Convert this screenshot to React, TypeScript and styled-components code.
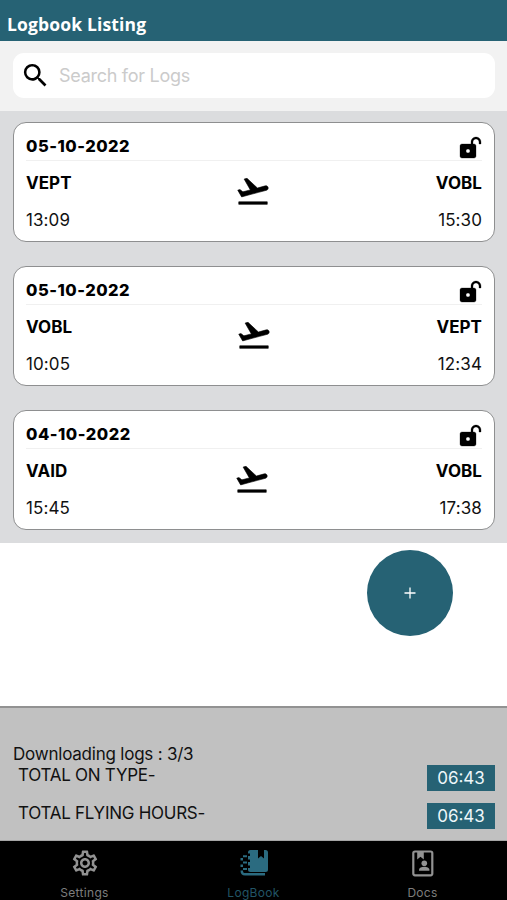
import React from 'react';
import styled, { createGlobalStyle } from 'styled-components';
import { MdSearch, MdOutlineSettings } from 'react-icons/md';

const TEAL = '#266274';

const GlobalStyle = createGlobalStyle`
  * { box-sizing: border-box; }
  body { margin: 0; background: #fff; font-family: Inter, 'Liberation Sans', sans-serif; color: #111; }
`;

const Screen = styled.div`
  width: 507px;
  height: 900px;
  display: flex;
  flex-direction: column;
  overflow: hidden;
  background: #fff;
`;

const Header = styled.header`
  height: 41px;
  flex: none;
  background: ${TEAL};
  padding: 12px 7px 0;
`;

const Title = styled.h1`
  margin: 0;
  font: 750 17.5px/24px 'Open Sans', sans-serif;
  letter-spacing: 0.15px;
  color: #fff;
`;

const SearchBand = styled.div`
  height: 70px;
  flex: none;
  background: #f2f2f2;
  padding: 12px 12px 0 13px;
`;

const SearchBox = styled.label`
  height: 45px;
  display: flex;
  align-items: center;
  background: #fff;
  border-radius: 11px;
  padding-left: 7px;
  svg { color: #000; }
`;

const SearchInput = styled.input`
  flex: 1;
  margin-left: 8px;
  padding: 0;
  border: 0;
  outline: 0;
  background: none;
  font: 400 18px/24px Inter, sans-serif;
  letter-spacing: -0.28px;
  &::placeholder { color: #cbcbcb; opacity: 1; }
`;

const List = styled.main`
  height: 432px;
  flex: none;
  background: #dbdcde;
  padding: 11px 12px 0 13px;
  display: flex;
  flex-direction: column;
  gap: 24px;
`;

const Card = styled.article`
  height: 120px;
  flex: none;
  border: 1px solid #8e8f90;
  border-radius: 13px;
  background: #fff;
  padding: 0 12px;
`;

const CardHead = styled.div`
  height: 38px;
  display: flex;
  justify-content: space-between;
  border-bottom: 1px solid #f0f0f0;
`;

const LogDate = styled.time`
  margin-top: 12px;
  font-size: 16.5px;
  line-height: 23px;
  font-weight: 800;
  letter-spacing: 0.5px;
  color: #000;
`;

const LockIcon = styled.svg`
  width: 24px;
  height: 24px;
  margin-top: 13px;
`;

const Route = styled.div`
  display: grid;
  grid-template-columns: auto 1fr auto;
`;

const Stop = styled.div<{ $end?: boolean }>`
  display: flex;
  flex-direction: column;
  gap: 13px;
  padding-top: 10px;
  text-align: ${p => (p.$end ? 'right' : 'left')};
`;

const Code = styled.strong`
  font-size: 17px;
  line-height: 24px;
  font-weight: 700;
  letter-spacing: 0.05px;
  color: #000;
`;

const Time = styled.span`
  font-size: 17px;
  line-height: 24px;
  letter-spacing: 0.1px;
`;

const Plane = styled.div`
  display: flex;
  justify-content: center;
  padding: 12px 1px 0 0;
  color: #000;
`;

const Blank = styled.div`
  height: 163px;
  flex: none;
  padding: 7px 54px 0 0;
  display: flex;
  justify-content: flex-end;
`;

const AddButton = styled.button`
  width: 86px;
  height: 86px;
  border: 0;
  padding: 0;
  border-radius: 50%;
  background: ${TEAL};
  color: #fff;
  display: grid;
  place-items: center;
`;

const Totals = styled.section`
  height: 135px;
  flex: none;
  background: #c1c1c1;
  border-top: 2px solid #929292;
  border-bottom: 1px solid #a5a5a5;
  padding: 35px 12px 0 13px;
`;

const Status = styled.div`
  font-size: 17px;
  line-height: 22px;
  letter-spacing: -0.22px;
`;

const TotalRow = styled.div`
  height: 38px;
  display: flex;
  justify-content: space-between;
  padding-left: 5px;
`;

const TotalLabel = styled.span`
  font-size: 17px;
  line-height: 20px;
  letter-spacing: -0.26px;
`;

const TotalValue = styled.span`
  width: 68px;
  height: 26px;
  background: ${TEAL};
  color: #eef7fa;
  text-align: center;
  font-size: 17px;
  line-height: 26px;
`;

const TabBar = styled.nav`
  height: 60px;
  flex: none;
  display: grid;
  grid-template-columns: repeat(3, 1fr);
  background: #000;
`;

const Tab = styled.div<{ $active?: boolean }>`
  display: flex;
  flex-direction: column;
  align-items: center;
  padding-top: 7px;
  color: ${p => (p.$active ? '#2b6b80' : '#929292')};
  svg { flex: none; }
`;

const TabLabel = styled.span<{ $active?: boolean }>`
  margin-top: 7px;
  font-size: 12px;
  line-height: 16px;
  letter-spacing: 0.3px;
  color: ${p => (p.$active ? '#225566' : '#7d7d7d')};
`;

const OpenLock = () => (
  <LockIcon viewBox="0 0 24 24" fill="#000" stroke="#000" strokeWidth="0.3">
    <path d="M18 1c-2.760 0-5 2.240-5 5v2H4c-1.100 0-2 .890-2 2v10c0 1.110.9 2 2 2h12c1.110 0 2-.890 2-2V10c0-1.100-.890-2-2-2h-1V6c0-1.660 1.340-3 3-3s3 1.340 3 3v2h2V6c0-2.760-2.240-5-5-5M10 13c1.100 0 2 .890 2 2s-.890 2-2 2-2-.890-2-2 .9-2 2-2Z" />
  </LockIcon>
);

const TakeoffIcon = () => (
  <svg width="36" height="36" viewBox="0 0 24 24" fill="currentColor" stroke="currentColor" strokeWidth="0.400" strokeLinejoin="round">
    <path d="M2.500 19.200h19v1.700h-19ZM22.070 9.640c-.210-.800-1.040-1.280-1.840-1.060L14.920 10 8 3.570l-1.910.51 4.140 7.170-4.970 1.330-1.970-1.540-1.450.39 1.820 3.160.77 1.330 1.600-.42 5.310-1.430 4.350-1.160L21 11.500c.810-.240 1.280-1.060 1.070-1.860Z" />
  </svg>
);

const NotebookIcon = () => (
  <svg width="30" height="30" viewBox="0 0 30 30" fill="currentColor">
    <path d="M11.500 2H19v8.500l3-2.500 3 2.500V2h1.500A2.500 2.500 0 0 1 29 4.500v17a2.500 2.500 0 0 1-2.500 2.500h-15A2.500 2.500 0 0 1 9 21.500V20h2v-2.500H9V14h2v-2.500H9V8h2V5.500H9v-1A2.500 2.500 0 0 1 11.500 2Z" />
    <path d="M4 7.200h4v2H4ZM1.500 10h2.500v2.500H1.500ZM4 13.500h4v2H4ZM1.500 16.500h2.500V19H1.500ZM4 20h4v2H4ZM1.500 22.500h2.500c0 2 .5 2.500 2 2.500h20v2.500H6c-3 0-4.500-1.500-4.500-5Z" />
  </svg>
);

const DocsIcon = () => (
  <svg width="30" height="30" viewBox="0 0 30 30">
    <rect x="5.300" y="3.500" width="19" height="23.800" rx="1.700" fill="none" stroke="currentColor" strokeWidth="2.200" />
    <path d="M9.200 3.500h6.600v8l-3.300-2.700-3.300 2.700Z" fill="currentColor" />
    <circle cx="16.300" cy="15.300" r="2.800" fill="currentColor" />
    <path d="M11 22.800v-1c0-4 10.400-4 10.400 0v1Z" fill="currentColor" />
  </svg>
);

const logs = [
  { date: '05-10-2022', from: 'VEPT', to: 'VOBL', off: '13:09', on: '15:30' },
  { date: '05-10-2022', from: 'VOBL', to: 'VEPT', off: '10:05', on: '12:34' },
  { date: '04-10-2022', from: 'VAID', to: 'VOBL', off: '15:45', on: '17:38' },
];

export default function App() {
  return (
    <Screen>
      <GlobalStyle />
      <Header><Title>Logbook Listing</Title></Header>
      <SearchBand>
        <SearchBox>
          <MdSearch size={31} />
          <SearchInput placeholder="Search for Logs" />
        </SearchBox>
      </SearchBand>
      <List>
        {logs.map((log, i) => (
          <Card key={i}>
            <CardHead>
              <LogDate>{log.date}</LogDate>
              <OpenLock />
            </CardHead>
            <Route>
              <Stop><Code>{log.from}</Code><Time>{log.off}</Time></Stop>
              <Plane><TakeoffIcon /></Plane>
              <Stop $end><Code>{log.to}</Code><Time>{log.on}</Time></Stop>
            </Route>
          </Card>
        ))}
      </List>
      <Blank>
        <AddButton aria-label="Add log">
          <svg width="12" height="12" viewBox="0 0 12 12" stroke="currentColor" strokeWidth="1.300">
            <path d="M6 .5v11M.5 6h11" />
          </svg>
        </AddButton>
      </Blank>
      <Totals>
        <Status>Downloading logs : 3/3</Status>
        <TotalRow><TotalLabel>TOTAL ON TYPE-</TotalLabel><TotalValue>06:43</TotalValue></TotalRow>
        <TotalRow><TotalLabel>TOTAL FLYING HOURS-</TotalLabel><TotalValue>06:43</TotalValue></TotalRow>
      </Totals>
      <TabBar>
        <Tab><MdOutlineSettings size={30} /><TabLabel>Settings</TabLabel></Tab>
        <Tab $active><NotebookIcon /><TabLabel $active>LogBook</TabLabel></Tab>
        <Tab><DocsIcon /><TabLabel>Docs</TabLabel></Tab>
      </TabBar>
    </Screen>
  );
}
